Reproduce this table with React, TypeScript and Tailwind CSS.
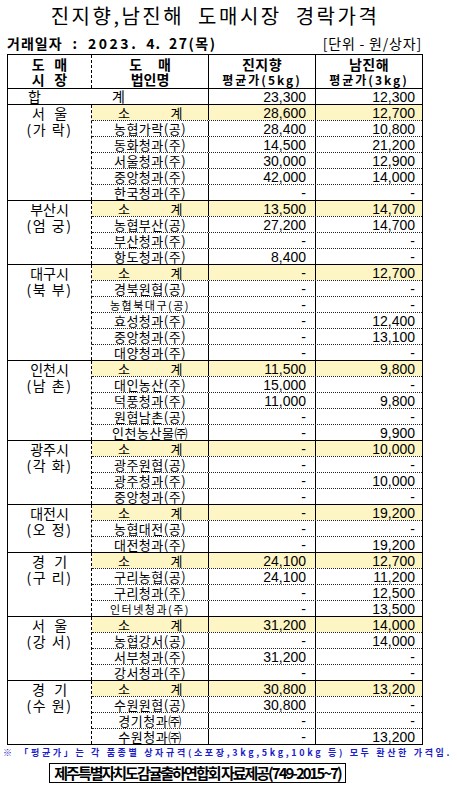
import React from "react";

type Row = [string, string, string];
type Group = { region: [string, string]; rows: Row[] };

const groups: Group[] = [
  {
    region: ["서   울", "(가 락)"],
    rows: [
      ["소계", "28,600", "12,700"],
      ["농협가락(공)", "28,400", "10,800"],
      ["동화청과(주)", "14,500", "21,200"],
      ["서울청과(주)", "30,000", "12,900"],
      ["중앙청과(주)", "42,000", "14,000"],
      ["한국청과(주)", "-", "-"],
    ],
  },
  {
    region: ["부산시", "(엄 궁)"],
    rows: [
      ["소계", "13,500", "14,700"],
      ["농협부산(공)", "27,200", "14,700"],
      ["부산청과(주)", "-", "-"],
      ["항도청과(주)", "8,400", "-"],
    ],
  },
  {
    region: ["대구시", "(북 부)"],
    rows: [
      ["소계", "-", "12,700"],
      ["경북원협(공)", "-", "-"],
      ["농협북대구(공)", "-", "-"],
      ["효성청과(주)", "-", "12,400"],
      ["중앙청과(주)", "-", "13,100"],
      ["대양청과(주)", "-", "-"],
    ],
  },
  {
    region: ["인천시", "(남 촌)"],
    rows: [
      ["소계", "11,500", "9,800"],
      ["대인농산(주)", "15,000", "-"],
      ["덕풍청과(주)", "11,000", "9,800"],
      ["원협남촌(공)", "-", "-"],
      ["인천농산물㈜", "-", "9,900"],
    ],
  },
  {
    region: ["광주시", "(각 화)"],
    rows: [
      ["소계", "-", "10,000"],
      ["광주원협(공)", "-", "-"],
      ["광주청과(주)", "-", "10,000"],
      ["중앙청과(주)", "-", "-"],
    ],
  },
  {
    region: ["대전시", "(오 정)"],
    rows: [
      ["소계", "-", "19,200"],
      ["농협대전(공)", "-", "-"],
      ["대전청과(주)", "-", "19,200"],
    ],
  },
  {
    region: ["경   기", "(구 리)"],
    rows: [
      ["소계", "24,100", "12,700"],
      ["구리농협(공)", "24,100", "11,200"],
      ["구리청과(주)", "-", "12,500"],
      ["인터넷청과(주)", "-", "13,500"],
    ],
  },
  {
    region: ["서   울", "(강 서)"],
    rows: [
      ["소계", "31,200", "14,000"],
      ["농협강서(공)", "-", "14,000"],
      ["서부청과(주)", "31,200", "-"],
      ["강서청과(주)", "-", "-"],
    ],
  },
  {
    region: ["경   기", "(수 원)"],
    rows: [
      ["소계", "30,800", "13,200"],
      ["수원원협(공)", "30,800", "-"],
      ["경기청과㈜", "-", "-"],
      ["수원청과㈜", "-", "13,200"],
    ],
  },
];

// names that are squeezed into the cell in the original sheet
const squeezed = ["농협북대구(공)", "인터넷청과(주)"];

function Num({ v }: { v: string }) {
  return (
    <span className="font-['Liberation_Sans_Narrow','Liberation_Sans',sans-serif] text-[14px]">
      {v}
    </span>
  );
}

function DataRow({ row, first }: { row: Row; first: boolean }) {
  const [name, a, b] = row;
  const sub = name === "소계";
  return (
    <div
      className={
        first
          ? "flex h-[15px] leading-[15px]"
          : "flex h-[16px] leading-[15px] border-t border-dotted border-[#222]"
      }
    >
      <div
        className={
          "w-[117px] border-r border-black text-center whitespace-pre tracking-[0.5px] " +
          (sub ? "bg-[#fdf5c4]" : "")
        }
      >
        {sub ? (
          <div className="flex justify-between pl-[26px] pr-[25px]">
            <span>소</span>
            <span>계</span>
          </div>
        ) : squeezed.includes(name) ? (
          <span className="text-[11px] tracking-[1.5px]">{name}</span>
        ) : (
          name
        )}
      </div>
      <div
        className={
          "w-[107px] border-r border-black text-right pr-[9px] " +
          (sub ? "bg-[#fdf5c4]" : "")
        }
      >
        <Num v={a} />
      </div>
      <div className={"flex-1 text-right pr-[7px] " + (sub ? "bg-[#fdf5c4]" : "")}>
        <Num v={b} />
      </div>
    </div>
  );
}

export default function App() {
  return (
    <div className="w-[457px] h-[785px] bg-white text-black font-['Noto_Sans_CJK_KR',sans-serif] text-[13px]">
      <div className="w-[416px] ml-[7px] pt-[4px] h-[32px] text-center text-[20px] leading-[24px] tracking-[2.5px] whitespace-pre">
        진지향,남진해  도매시장  경락가격
      </div>
      <div className="w-[416px] ml-[7px] h-[22px] flex items-center justify-between">
        <div className="flex items-center gap-[8px] font-bold text-[14px] tracking-[1px]">
          <span>거래일자</span>
          <span className="mx-[2px]">:</span>
          <span className="tracking-[2.5px]">2023.</span>
          <span>4.</span>
          <span className="tracking-[1.5px]">27(목)</span>
        </div>
        <span className="text-[14px] tracking-[0.8px] whitespace-pre pr-[1px]">[단위 - 원/상자]</span>
      </div>

      <div className="w-[416px] ml-[7px] border border-black">
        {/* header */}
        <div className="flex h-[34px] border-b border-black font-bold leading-[15px] text-[14px]">
          <div className="w-[84px] border-r border-dashed border-black flex flex-col justify-center items-center whitespace-pre">
            <span>도   매</span>
            <span>시   장</span>
          </div>
          <div className="w-[117px] border-r border-black flex flex-col justify-center items-center whitespace-pre">
            <span>도     매</span>
            <span>법인명</span>
          </div>
          <div className="w-[107px] border-r border-black flex flex-col justify-center items-center">
            <span className="tracking-[0.5px]">진지향</span>
            <span className="text-[12px] tracking-[2px]">평균가(5kg)</span>
          </div>
          <div className="flex-1 flex flex-col justify-center items-center">
            <span className="tracking-[0.5px]">남진해</span>
            <span className="text-[12px] tracking-[2px]">평균가(3kg)</span>
          </div>
        </div>

        {/* grand total */}
        <div className="flex h-[15px] leading-[15px] text-[14px]">
          <div className="w-[201px] border-r border-black flex pl-[20px]">
            <span className="w-[84px]">합</span>
            <span>계</span>
          </div>
          <div className="w-[107px] border-r border-black text-right pr-[9px]">
            <Num v="23,300" />
          </div>
          <div className="flex-1 text-right pr-[7px]">
            <Num v="12,300" />
          </div>
        </div>

        {groups.map((g, gi) => (
          <div key={gi} className="flex border-t border-black">
            <div className="w-[84px] border-r border-dashed border-black text-center text-[14px] leading-[16px] whitespace-pre">
              <div>{g.region[0]}</div>
              <div className="tracking-[1.5px]">{g.region[1]}</div>
            </div>
            <div className="flex-1">
              {g.rows.map((r, ri) => (
                <DataRow key={ri} row={r} first={ri === 0} />
              ))}
            </div>
          </div>
        ))}
      </div>

      <div className="h-[15px] pl-[3px] flex items-center text-[9px] font-bold text-[#1c1cc8] tracking-[2.65px] whitespace-pre">
        ※ 「평균가」는 각 품종별 상자규격(소포장,3kg,5kg,10kg 등) 모두 환산한 가격임.
      </div>
      <div className="mt-[3px] ml-[49px] w-[297px] h-[20px] border border-black flex items-center justify-center font-bold text-[15px] tracking-[-2px] whitespace-pre">
        제주특별자치도감귤출하연합회 자료제공(749-2015~7)
      </div>
    </div>
  );
}
